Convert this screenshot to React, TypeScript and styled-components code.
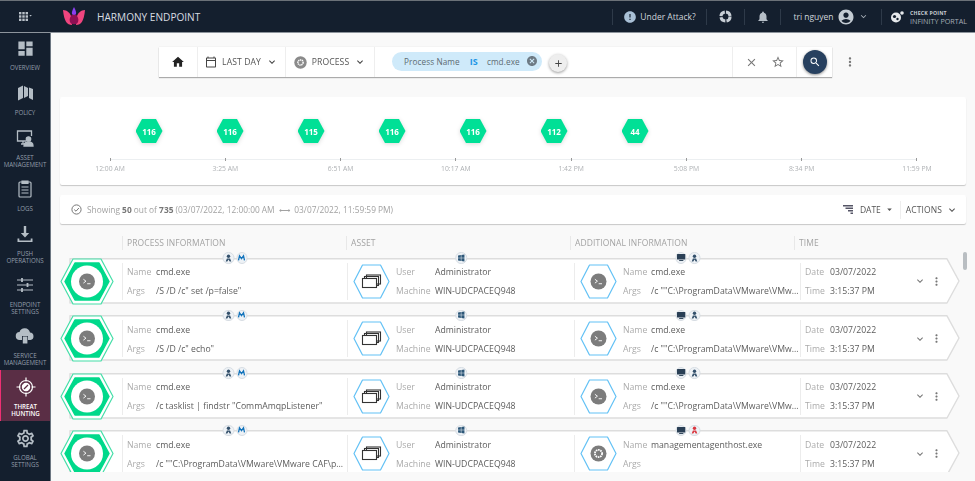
import React from "react";
import styled, { createGlobalStyle } from "styled-components";
import { MdHome, MdOutlineCalendarToday, MdNotifications, MdClose, MdStarBorder, MdSearch, MdMoreVert, MdExpandMore, MdArrowDropDown, MdAdd, MdCancel, MdOutlineSettings, MdAccountCircle, MdDashboard, MdError } from "react-icons/md";

const Global = createGlobalStyle`
  html, body { margin: 0; padding: 0; width: 975px; height: 481px; overflow: hidden; background: #f9f9f9; }
  body { font-family: "Open Sans", "Liberation Sans", sans-serif; color: #555; }
  * { box-sizing: border-box; }
`;

const Shell = styled.div`
  width: 975px; height: 481px; display: grid; filter: blur(0.3px);
  grid-template-columns: 51px 1fr; grid-template-rows: 33px 1fr; overflow: hidden;
`;
const Header = styled.header`
  grid-column: 1 / 3; position: relative; z-index: 2; display: flex; align-items: center;
  background: #141f2e; border-top: 1px solid #6b7178; border-bottom: 1px solid #8d949c; color: #cfd5db;
`;
const AppGrid = styled.div`
  width: 51px; display: flex; justify-content: center; align-items: center; gap: 1px; margin-right: 11px;
`;
const Brand = styled.div`
  font-size: 10.1px; color: #d7dce1; margin-left: 11px; flex: 1;
`;
const HeadCell = styled.div<{ $w: number; $sep?: boolean }>`
  width: ${p => p.$w}px; height: 16px; display: flex; align-items: center; justify-content: center; gap: 3px;
  border-left: ${p => (p.$sep ? "1px solid #2e3a49" : "none")}; font-size: 8.5px; color: #cfd5db;
`;
const PortalText = styled.div`
  display: flex; flex-direction: column; line-height: 8px; font-size: 7.2px; color: #a5adb6; margin-left: 3px;
  b { font-size: 5.2px; color: #c8cdd3; letter-spacing: 0.2px; }
`;
const Sidebar = styled.nav`
  margin-top: -2px; background: #141f2e; border-right: 1px solid #6d7782; display: flex; flex-direction: column;
`;
const NavItem = styled.div<{ $h: number; $active?: boolean }>`
  height: ${p => p.$h}px; flex: none; padding-top: 7px; display: flex; flex-direction: column; align-items: center;
  background: ${p => (p.$active ? "#5a2e45" : "transparent")};
  border-left: ${p => (p.$active ? "1px solid #ef2f73" : "0")};
  color: ${p => (p.$active ? "#fff" : "#939eaa")};
`;
const NavIcon = styled.div`
  height: 20px; display: flex; align-items: center; justify-content: center; color: #b4bdc5;
`;
const NavLabel = styled.div<{ $active?: boolean }>`
  margin-top: 5.5px; font-size: 6.2px; line-height: 7.3px; text-align: center; text-transform: uppercase;
  font-weight: ${p => (p.$active ? 600 : 400)}; white-space: pre-line; letter-spacing: -0.05px;
`;
const Main = styled.main`
  min-width: 0; padding: 14px 9px 0 9px; display: flex; flex-direction: column; position: relative;
`;
const SearchRow = styled.div`
  display: flex; align-items: center; padding-left: 99px; height: 30px; flex: none;
`;
const SearchBar = styled.div`
  width: 673px; height: 30px; background: #fff; display: flex; align-items: stretch;
  box-shadow: 0 1px 1px rgba(0,0,0,.3), 0 0 1px rgba(0,0,0,.12);
`;
const BarCell = styled.div<{ $w?: number; $grow?: boolean; $justify?: string; $gap?: number; $last?: boolean }>`
  ${p => (p.$w ? `width: ${p.$w}px; flex: none;` : "")}
  ${p => (p.$grow ? "flex: 1; padding-left: 17px;" : "")}
  display: flex; align-items: center; justify-content: ${p => p.$justify || "center"}; gap: ${p => p.$gap ?? 5}px;
  border-right: ${p => (p.$last ? "0" : "1px solid #eeeeee")}; font-size: 8.6px; color: #555; letter-spacing: 0.1px;
`;
const Chip = styled.div`
  width: 150px; height: 19px; border-radius: 10px; background: #cfeafa; display: flex; align-items: center;
  padding: 0 4px 0 12px; font-size: 8.2px; color: #5d6a72; margin-top: -2px;
`;
const ChipIs = styled.b`
  color: #1e96e6; margin: 0 9px 0 10px; font-size: 9px;
`;
const AddButton = styled.div`
  width: 18px; height: 18px; border-radius: 50%; background: #eee; margin: 2px 0 0 7px; color: #444;
  display: flex; align-items: center; justify-content: center; box-shadow: 0 1px 3px rgba(0,0,0,.4);
`;
const SearchCircle = styled.div`
  width: 24px; height: 24px; border-radius: 50%; background: #27405f; color: #fff;
  display: flex; align-items: center; justify-content: center; box-shadow: 0 1px 3px rgba(0,0,0,.45);
`;
const Kebab = styled.div`
  margin-left: 11px; color: #777; display: flex;
`;
const Card = styled.section`
  background: #fff; border-radius: 2px; box-shadow: 0 1px 1px rgba(0,0,0,.2);
`;
const Timeline = styled(Card)`
  height: 88px; margin-top: 20px; flex: none; padding-top: 22px;
`;
const HexRow = styled.div`
  display: flex; gap: 54px; padding-left: 75.5px; filter: drop-shadow(0 1px 2px rgba(0,0,0,.15));
`;
const HexCount = styled.div`
  width: 27px; height: 24px; background: #00e096; color: #fff; font-size: 8px; font-weight: 700;
  display: flex; align-items: center; justify-content: center;
  clip-path: polygon(24% 0, 76% 0, 100% 50%, 76% 100%, 24% 100%, 0 50%);
`;
const Axis = styled.div`
  margin: 16px 49px 0 50px; border-top: 1px solid #eceff1; display: flex; justify-content: space-between;
`;
const Tick = styled.div`
  width: 0; display: flex; flex-direction: column; align-items: center; font-size: 6.8px; color: #aeb1b4; white-space: nowrap;
  &::before { content: ""; width: 1px; height: 3px; background: #999; margin-top: -2px; margin-bottom: 3px; flex: none; }
`;
const InfoBar = styled(Card)`
  height: 29px; margin-top: 10px; flex: none; display: flex; align-items: center; padding: 0 8px 0 11px; font-size: 8.35px; color: #a2a2a2;
  b { color: #777; font-weight: 700; }
`;
const InfoText = styled.div`
  margin-left: 5px; flex: 1; white-space: nowrap;
`;
const SortBtn = styled.div`
  display: flex; align-items: center; height: 18px; padding-right: 5px; border-right: 1px solid #eee; color: #555; font-size: 8.5px; gap: 3px;
`;
const SortLabel = styled.span`
  margin-left: 4px;
`;
const ActionsBtn = styled.div`
  display: flex; align-items: center; padding-left: 5px; color: #555; font-size: 8.5px; gap: 4px; letter-spacing: 0.1px;
`;
const ColHeads = styled.div`
  margin-top: 12px; height: 14px; flex: none; display: grid; grid-template-columns: 62px 224px 224px 224px 1fr;
`;
const ColHead = styled.div`
  border-left: 1px solid #e8e8e8; padding-left: 4px; font-size: 8.5px; line-height: 14px; color: #a3a3a3; letter-spacing: 0.1px; white-space: nowrap;
  &:first-child { border-left: 0; }
`;
const List = styled.div`
  height: 222px; flex: none; padding-top: 7.5px; overflow: hidden; position: relative;
  margin-right: -4px; display: flex; flex-direction: column; gap: 11.5px;
`;
const RowWrap = styled.div`
  position: relative; height: 46px; flex: none; width: 900px;
`;
const RowBg = styled.svg`
  position: absolute; left: 0; top: 0; width: 900px; height: 46px;
`;
const RowGrid = styled.div`
  position: relative; height: 46px; display: grid; grid-template-columns: 62px 225px 227px 226px 114px 1fr; align-items: center;
`;
const Cell = styled.div`
  position: relative; height: 37px; border-left: 1px solid #ececec; display: flex; align-items: center; padding-left: 4px; min-width: 0;
`;
const Badges = styled.div`
  position: absolute; left: 50%; top: -10.5px; transform: translateX(-50%); display: flex; gap: 2px;
`;
const Badge = styled.div`
  width: 11.5px; height: 11.5px; border-radius: 50%; background: #eef2f6; border: 1px solid #d7dde3;
  display: flex; align-items: center; justify-content: center;
`;
const Pairs = styled.div<{ $label: number }>`
  flex: 1; min-width: 0; display: grid; grid-template-columns: ${p => p.$label}px minmax(0, 1fr); row-gap: 5px; align-items: center;
  font-size: 8.7px; line-height: 14px; padding-top: 1px;
`;
const Label = styled.div`
  color: #ababab;
`;
const Value = styled.div`
  color: #5c5c5c; white-space: nowrap;
`;
const RowActions = styled.div`
  display: flex; align-items: center; color: #777; gap: 4px;
`;
const HexSlot = styled.div`
  flex: none; display: flex;
`;
const CellHexSlot = styled(HexSlot)`
  margin: 0 6px 0 1px;
`;
const Thumb = styled.div`
  position: absolute; right: 8px; top: 219px; width: 4px; height: 18px; background: #b9bec2; border-radius: 2px;
`;

const Terminal = ({ cx, cy, r }: { cx: number; cy: number; r: number }) => (
  <g>
    <circle cx={cx} cy={cy} r={r} fill="#7c7c7c" />
    <path d={`M${cx - r * 0.45} ${cy - r * 0.28} l${r * 0.32} ${r * 0.24} l${-r * 0.32} ${r * 0.24} M${cx + r * 0.02} ${cy + r * 0.28} h${r * 0.42}`} stroke="#fff" strokeWidth="0.9" fill="none" />
  </g>
);
const MainHex = () => (
  <svg width="54" height="47" viewBox="0 0 54 47">
    <path d="M13 1 H41 L53 23.5 L41 46 H13 L1 23.5 Z" fill="#fff" stroke="#45dea8" strokeWidth="1.2" strokeLinejoin="round" />
    <path d="M15 5 H39 L49 23.5 L39 42 H15 L5 23.5 Z" fill="#00d98b" stroke="#00d98b" strokeWidth="1.5" strokeLinejoin="round" />
    <circle cx="27" cy="23.5" r="16" fill="#fff" />
    <Terminal cx={27} cy={23.5} r={8} />
  </svg>
);
const SmallHex = ({ children }: { children: React.ReactNode }) => (
  <svg width="37" height="35" viewBox="0 0 37 35">
    <path d="M9.5 1 H27.5 L36 17.5 L27.5 34 H9.5 L1 17.5 Z" fill="#fff" stroke="#62c1f5" strokeWidth="1.2" strokeLinejoin="round" />
    {children}
  </svg>
);
const WindowsStack = () => (
  <g fill="none" stroke="#333" strokeWidth="1.1">
    <rect x="13.5" y="11" width="14" height="9" />
    <rect x="11.5" y="12.5" width="14" height="9" />
    <rect x="9.5" y="14.5" width="14" height="9" fill="#fff" />
  </g>
);
const GearCircle = () => (
  <g>
    <circle cx="18.5" cy="17.5" r="8" fill="#7c7c7c" />
    <circle cx="18.5" cy="17.5" r="3.6" fill="none" stroke="#fff" strokeWidth="1.8" strokeDasharray="1.6 0.7" />
  </g>
);
const AgentIcon = ({ red }: { red?: boolean }) => (
  <svg width="8" height="8" viewBox="0 0 8 8">
    <circle cx="4" cy="2.2" r="1.7" fill={red ? "#d9363e" : "#33506b"} />
    <path d="M1.2 7.6 L2.4 4.4 H5.6 L6.8 7.6 H5.2 L4 5.6 L2.8 7.6 Z" fill={red ? "#d9363e" : "#33506b"} />
  </svg>
);
const MIcon = () => (
  <svg width="8" height="8" viewBox="0 0 8 8">
    <path d="M1 6.4 L2 1.8 L4 4.6 L6 1.8 L7 6.4" fill="none" stroke="#1273bb" strokeWidth="1.3" />
  </svg>
);
const WinIcon = () => (
  <svg width="8" height="8" viewBox="0 0 8 8" fill="#2d5778">
    <path d="M.8 1.4 3.6 1v2.8H.8zM4.1.9 7.2.5v3.3H4.1zM.8 4.3h2.8V7L.8 6.6zM4.1 4.3h3.1v3.2L4.1 7.1z" />
  </svg>
);
const MonitorIcon = () => (
  <svg width="10" height="9" viewBox="0 0 10 9" fill="#2a3f55">
    <rect x=".5" y=".8" width="9" height="5.8" rx=".6" />
    <rect x="2.8" y="7.2" width="4.4" height="1" />
  </svg>
);

const navIcon = { width: 20, height: 20, viewBox: "0 0 20 20" };
const NavOverview = () => <MdDashboard size={19} />;
const NavPolicy = () => (
  <svg {...navIcon} fill="currentColor"><path d="M3 5 8 2.5V15L3 17.5zM9 3l4 2v8l-4 2zM14 4.5l4 1.5v11l-4-2z" /></svg>
);
const NavAsset = () => (
  <svg {...navIcon} fill="none" stroke="currentColor" strokeWidth="1.3"><path d="M11 13H2.5V3h14v5M6 16h4M8 13v3" /><circle cx="13.5" cy="11" r="2.2" fill="currentColor" /><path d="M9 18c0-3 2-4 4.5-4s4.5 1 4.5 4z" fill="currentColor" /></svg>
);
const NavLogs = () => (
  <svg {...navIcon} fill="none" stroke="currentColor" strokeWidth="1.2"><rect x="4" y="3" width="12" height="15" rx="1" /><path d="M7 2h6v2.5H7z" fill="currentColor" /><path d="M6.5 8h7M6.5 11h7M6.5 14h7" /></svg>
);
const NavPush = () => (
  <svg {...navIcon} fill="currentColor"><path d="M8.8 2h2.4v7h3L10 13.5 5.8 9h3z" /><path d="M2.5 14.5h1.8v2h11.4v-2h1.8V18h-15z" /></svg>
);
const NavSliders = () => (
  <svg {...navIcon} stroke="currentColor" strokeWidth="1" fill="none"><path d="M2 5h16M2 10h16M2 15h16" /><path d="M7 3v4M12.5 8v4M7 13v4" strokeWidth="1.8" /></svg>
);
const NavCloud = () => (
  <svg {...navIcon} fill="currentColor"><path d="M5 14a4 4 0 0 1-.5-8A5.5 5.5 0 0 1 15 6.5 3.8 3.8 0 0 1 15.5 14z" /><rect x="7" y="10" width="6" height="8" fill="#141f2e" /><rect x="7.8" y="10.5" width="4.6" height="7" /></svg>
);
const NavTarget = () => (
  <svg {...navIcon} fill="none" stroke="#fff" strokeWidth="1.2"><circle cx="10" cy="10" r="6.5" /><path d="M10 0.5v4M10 15.5v4M.5 10h4M15.5 10h4" /><circle cx="10" cy="10" r="3.6" fill="#fff" /><path d="M8 12l4-4" stroke="#5a2e45" /></svg>
);
const NavGear = () => <MdOutlineSettings size={21} />;

const navItems = [
  { label: "Overview", h: 45, icon: <NavOverview /> },
  { label: "Policy", h: 45, icon: <NavPolicy /> },
  { label: "Asset\nManagement", h: 51, icon: <NavAsset /> },
  { label: "Logs", h: 45, icon: <NavLogs /> },
  { label: "Push\nOperations", h: 51, icon: <NavPush /> },
  { label: "Endpoint\nSettings", h: 51, icon: <NavSliders /> },
  { label: "Service\nManagement", h: 51, icon: <NavCloud /> },
  { label: "Threat\nHunting", h: 51, icon: <NavTarget />, active: true },
  { label: "Global\nSettings", h: 51, icon: <NavGear /> },
];

const hexCounts = [116, 116, 115, 116, 116, 112, 44];
const ticks = ["12:00 AM", "3:25 AM", "6:51 AM", "10:17 AM", "1:42 PM", "5:08 PM", "8:34 PM", "11:59 PM"];
const parentShort = '/c ""C:\\ProgramData\\VMware\\VMw...';
const rows = [
  { args: '/S /D /c" set /p=false"', addName: "cmd.exe", addArgs: parentShort, gear: false },
  { args: '/S /D /c" echo"', addName: "cmd.exe", addArgs: parentShort, gear: false },
  { args: '/c tasklist | findstr "CommAmqpListener"', addName: "cmd.exe", addArgs: parentShort, gear: false },
  { args: '/c ""C:\\ProgramData\\VMware\\VMware CAF\\p...', addName: "managementagenthost.exe", addArgs: "", gear: true },
];

const Row = ({ r }: { r: (typeof rows)[number] }) => (
  <RowWrap>
    <RowBg viewBox="0 0 900 46">
      <path d="M10 .8 H887 L899 23 L887 45 H10 Z" fill="#fff" stroke="#dddddd" strokeWidth="1.4" strokeLinejoin="round" />
    </RowBg>
    <RowGrid>
      <HexSlot><MainHex /></HexSlot>
      <Cell>
        <Badges>
          <Badge><AgentIcon /></Badge>
          <Badge><MIcon /></Badge>
        </Badges>
        <Pairs $label={29}>
          <Label>Name</Label><Value>cmd.exe</Value>
          <Label>Args</Label><Value>{r.args}</Value>
        </Pairs>
      </Cell>
      <Cell>
        <Badges><Badge><WinIcon /></Badge></Badges>
        <CellHexSlot><SmallHex><WindowsStack /></SmallHex></CellHexSlot>
        <Pairs $label={39}>
          <Label>User</Label><Value>Administrator</Value>
          <Label>Machine</Label><Value>WIN-UDCPACEQ948</Value>
        </Pairs>
      </Cell>
      <Cell>
        <Badges>
          <Badge><MonitorIcon /></Badge>
          <Badge><AgentIcon red={r.gear} /></Badge>
        </Badges>
        <CellHexSlot><SmallHex>{r.gear ? <GearCircle /> : <Terminal cx={18.5} cy={17.5} r={8} />}</SmallHex></CellHexSlot>
        <Pairs $label={28}>
          <Label>Name</Label><Value>{r.addName}</Value>
          <Label>Args</Label><Value>{r.addArgs}</Value>
        </Pairs>
      </Cell>
      <Cell>
        <Pairs $label={25}>
          <Label>Date</Label><Value>03/07/2022</Value>
          <Label>Time</Label><Value>3:15:37 PM</Value>
        </Pairs>
      </Cell>
      <RowActions>
        <MdExpandMore size={12} />
        <MdMoreVert size={13} />
      </RowActions>
    </RowGrid>
  </RowWrap>
);

export default function App() {
  return (
    <>
      <Global />
      <Shell>
        <Header>
          <AppGrid>
            <svg width="13" height="10" viewBox="0 0 13 10" fill="#b9c1c9">
              {[0, 3.3, 6.6].flatMap(y => [0, 3.3, 6.6].map(x => <rect key={`${x}-${y}`} x={x} y={y} width="2.4" height="2.4" />))}
              <path d="M10.4 3h2.4l-1.2 1.5z" />
            </svg>
          </AppGrid>
          <svg width="24" height="19" viewBox="0 0 24 19">
            <path d="M1 3 C5 3 8 6 9 9 L10 18 C5 18 2 14 1 3Z" fill="#f0457f" />
            <path d="M23 3 C19 3 16 6 15 9 L14 18 C19 18 22 14 23 3Z" fill="#f0457f" />
            <path d="M12 6 C16 9 17 12 16 15 C15 18 9 18 8 15 C7 12 8 9 12 6Z" fill="#8e0f54" />
            <path d="M12 0 C13.5 3 14.5 5 14 7 C13.6 8 10.4 8 10 7 C9.5 5 10.5 3 12 0Z" fill="#8a3ff0" />
          </svg>
          <Brand>HARMONY ENDPOINT</Brand>
          <HeadCell $w={94} $sep><MdError size={14} color="#a9c0d6" /> <span>Under Attack?</span></HeadCell>
          <HeadCell $w={38} $sep>
            <svg width="13" height="13" viewBox="0 0 13 13" fill="none" stroke="#c7ced5"><circle cx="6.5" cy="6.5" r="4.6" strokeWidth="3" strokeDasharray="6 1.2" /></svg>
          </HeadCell>
          <HeadCell $w={36} $sep><MdNotifications size={14} color="#b5bec7" /></HeadCell>
          <HeadCell $w={101} $sep>
            <span>tri nguyen</span>
            <MdAccountCircle size={18} color="#c4ccd3" />
            <MdExpandMore size={11} color="#a5adb6" />
          </HeadCell>
          <HeadCell $w={94} $sep>
            <svg width="14" height="13" viewBox="0 0 14 13" fill="#e6e9ec">
              <circle cx="6" cy="7.5" r="5" /><circle cx="4.5" cy="6.5" r="1.6" fill="#141f2e" /><circle cx="7.5" cy="9" r="1.2" fill="#141f2e" /><circle cx="12" cy="3" r="1.8" />
            </svg>
            <PortalText><b>CHECK POINT</b><span>INFINITY PORTAL</span></PortalText>
          </HeadCell>
        </Header>
        <Sidebar>
          {navItems.map(n => (
            <NavItem key={n.label} $h={n.h} $active={n.active}>
              <NavIcon>{n.icon}</NavIcon>
              <NavLabel $active={n.active}>{n.label}</NavLabel>
            </NavItem>
          ))}
        </Sidebar>
        <Main>
          <SearchRow>
            <SearchBar>
              <BarCell $w={39}><MdHome size={14} color="#222" /></BarCell>
              <BarCell $w={88}><MdOutlineCalendarToday size={12} color="#444" /> LAST DAY <MdExpandMore size={12} color="#444" /></BarCell>
              <BarCell $w={89}>
                <svg width="13" height="13" viewBox="0 0 13 13"><circle cx="6.5" cy="6.5" r="6.2" fill="#8a8a8a" /><circle cx="6.5" cy="6.5" r="2.6" fill="none" stroke="#fff" strokeWidth="1.5" strokeDasharray="1.3 .6" /></svg>
                PROCESS <MdExpandMore size={12} color="#444" />
              </BarCell>
              <BarCell $grow $justify="flex-start" $gap={0}>
                <Chip>
                  <span>Process Name</span><ChipIs>IS</ChipIs><span>cmd.exe</span>
                  <MdCancel size={12} color="#6d7a84" style={{ marginLeft: "auto" }} />
                </Chip>
                <AddButton><MdAdd size={11} /></AddButton>
              </BarCell>
              <BarCell $w={64} $gap={13}>
                <MdClose size={13} color="#777" /><MdStarBorder size={14} color="#777" />
              </BarCell>
              <BarCell $w={35} $last><SearchCircle><MdSearch size={12} /></SearchCircle></BarCell>
            </SearchBar>
            <Kebab><MdMoreVert size={14} /></Kebab>
          </SearchRow>
          <Timeline>
            <HexRow>{hexCounts.map((c, i) => <HexCount key={i}>{c}</HexCount>)}</HexRow>
            <Axis>{ticks.map(t => <Tick key={t}>{t}</Tick>)}</Axis>
          </Timeline>
          <InfoBar>
            <svg width="11" height="11" viewBox="0 0 11 11" fill="none" stroke="#777"><circle cx="5.5" cy="5.5" r="4.6" /><path d="M3.2 5.6 5 7.2 7.9 4" /></svg>
            <InfoText>Showing <b>50</b> out of <b>735</b> (03/07/2022, 12:00:00 AM &nbsp;⟷&nbsp; 03/07/2022, 11:59:59 PM)</InfoText>
            <SortBtn>
              <svg width="10" height="9" viewBox="0 0 10 9" fill="#556"><path d="M0 0h10v1.6H0zM2.5 2.5H10v1.6H2.5zM5 5h5v1.6H5zM7.5 7.4H10V9H7.5z" /></svg>
              <SortLabel>DATE</SortLabel> <MdArrowDropDown size={11} />
            </SortBtn>
            <ActionsBtn>ACTIONS <MdExpandMore size={12} /></ActionsBtn>
          </InfoBar>
          <ColHeads>
            <ColHead />
            <ColHead>PROCESS INFORMATION</ColHead>
            <ColHead>ASSET</ColHead>
            <ColHead>ADDITIONAL INFORMATION</ColHead>
            <ColHead>TIME</ColHead>
          </ColHeads>
          <List>{rows.map((r, i) => <Row key={i} r={r} />)}</List>
          <Thumb />
        </Main>
      </Shell>
    </>
  );
}
